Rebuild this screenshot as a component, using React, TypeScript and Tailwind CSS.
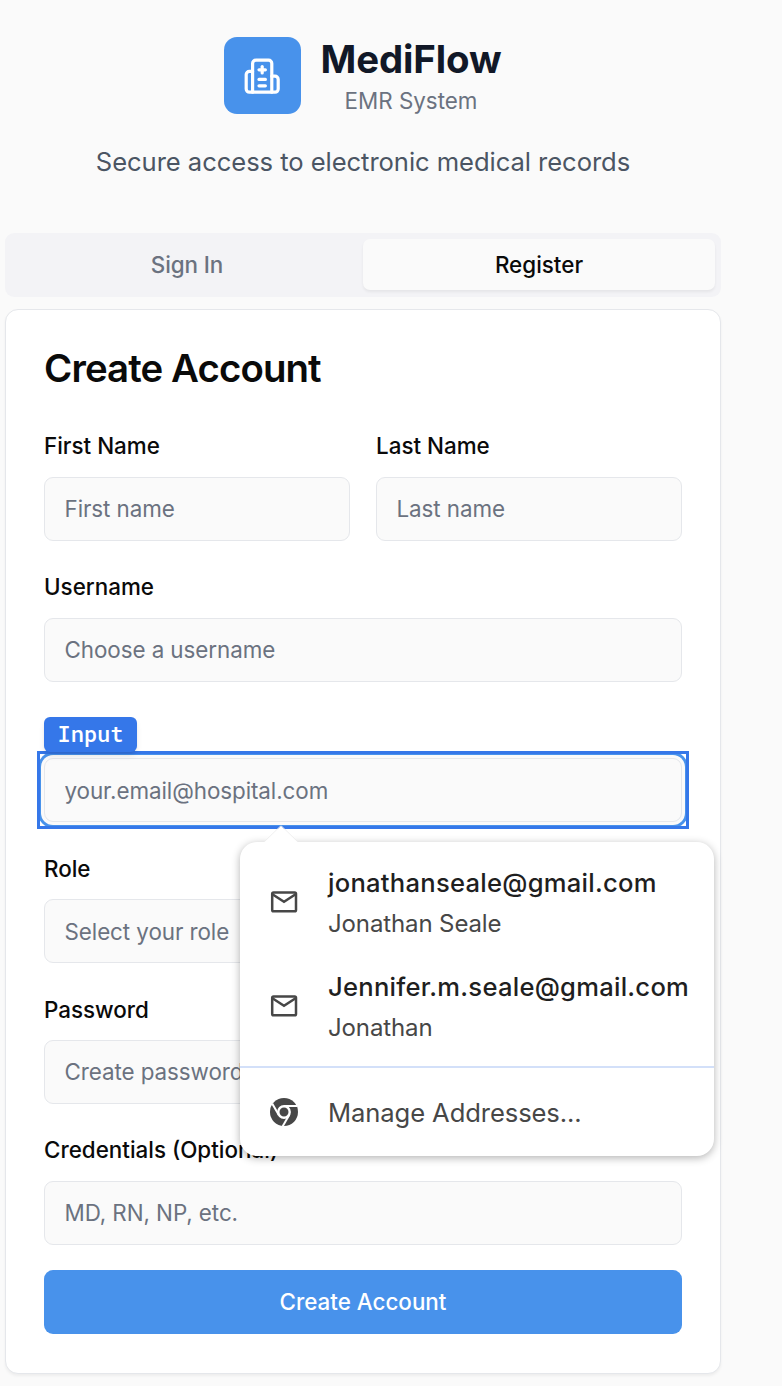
import React from "react";

type FieldProps = { label: string; placeholder: string };

const boxClass =
  "block h-16 w-full rounded-[9px] border border-[#e5e7eb] bg-[#fafafa] px-[19.5px] text-[22.4px] tracking-[-0.07px] text-gray-900 outline-none placeholder:text-[#6b7280] placeholder:opacity-100";

function Field({ label, placeholder }: FieldProps) {
  return (
    <div className="min-w-0 flex-1">
      <label className="block h-[22.4px] text-[22.4px] leading-[23.2px] font-medium">{label}</label>
      <input className={`mt-[20px] ${boxClass}`} placeholder={placeholder} />
    </div>
  );
}

function HospitalIcon() {
  return (
    <svg
      viewBox="0 0 24 24"
      className="mt-[2px] mr-[2px] size-[38.4px]"
      fill="none"
      stroke="currentColor"
      strokeWidth="2"
      strokeLinecap="round"
      strokeLinejoin="round"
    >
      <path d="M12 6v4" />
      <path d="M14 14h-4" />
      <path d="M14 18h-4" />
      <path d="M14 8h-4" />
      <path d="M18 12h2a2 2 0 0 1 2 2v6a2 2 0 0 1-2 2H4a2 2 0 0 1-2-2v-9a2 2 0 0 1 2-2h2" />
      <path d="M18 22V4a2 2 0 0 0-2-2H8a2 2 0 0 0-2 2v18" />
    </svg>
  );
}

function MailIcon() {
  return (
    <svg viewBox="0 0 28 24" className="h-6 w-7 shrink-0" fill="none" stroke="#474747" strokeWidth="2.5">
      <rect x="2.2" y="2.4" width="23.8" height="18.8" rx="1.3" />
      <path d="M2.4 4.3 14 11.7l11.6-7.4" />
    </svg>
  );
}

function ChromeIcon() {
  return (
    <svg viewBox="0 0 28 28" className="size-7 shrink-0">
      <circle cx="14" cy="14" r="14" fill="#474747" />
      <circle cx="14" cy="14" r="5.7" fill="#474747" stroke="#fff" strokeWidth="2.4" />
      <g stroke="#fff" strokeWidth="2">
        <path d="M14 8H27" />
        <path d="M14 8H27" transform="rotate(120 14 14)" />
        <path d="M14 8H27" transform="rotate(240 14 14)" />
      </g>
    </svg>
  );
}

function Suggestion({ email, name }: { email: string; name: string }) {
  return (
    <div className="flex h-[104px] items-center pl-[30px]">
      <MailIcon />
      <div className="ml-[30px] pt-[2px]">
        <div className="h-[41px] text-[25.6px] leading-[41px] font-medium tracking-[0.25px] text-[#1f1f1f]">{email}</div>
        <div className="h-[41px] text-[24px] leading-[41px] tracking-[-0.12px] text-[#474747]">{name}</div>
      </div>
    </div>
  );
}

export default function App() {
  return (
    <div className="h-[1386px] w-[782px] overflow-hidden bg-[#fafafa] pl-[5px] font-['Inter',sans-serif] text-[#0a0a0a]">
      <div className="w-[716px]">
        <header className="flex h-[233px] flex-col items-center pt-[37px]">
          <div className="flex items-start gap-[19px]">
            <div className="flex size-[77px] items-center justify-center rounded-[13px] bg-[#4892eb] text-white">
              <HospitalIcon />
            </div>
            <div className="text-center">
              <h1 className="h-[45px] text-[38.4px] leading-[44px] font-bold tracking-[-0.1px] text-[#111827]">MediFlow</h1>
              <p className="h-[38px] text-[22.4px] leading-[38px] text-[#6b7280]">EMR System</p>
            </div>
          </div>
          <p className="mt-[23px] text-[25.6px] leading-[38px] tracking-[-0.06px] text-[#4b5563]">
            Secure access to electronic medical records
          </p>
        </header>

        <div className="flex h-16 rounded-[9px] bg-[#f3f3f6] p-[6px] text-[22.4px] font-medium">
          <button className="h-[51px] flex-1 pt-px tracking-[-0.1px] text-[#6b7280]">Sign In</button>
          <button className="h-[51px] flex-1 rounded-[7px] bg-[#fafafa] pt-px shadow-[0_2px_3px_rgba(0,0,0,0.06)]">
            Register
          </button>
        </div>

        <main className="mt-[12px] h-[1065px] rounded-[13px] border border-[#e5e7eb] bg-white px-[38px] pt-[37px] shadow-[0_2px_3px_rgba(0,0,0,0.05)]">
          <h2 className="h-[42px] text-[38.4px] leading-[42px] font-semibold tracking-[-0.9px]">Create Account</h2>
          <form className="mt-[45.4px] flex flex-col gap-[34.4px]">
            <div className="flex gap-[26px]">
              <Field label="First Name" placeholder="First name" />
              <Field label="Last Name" placeholder="Last name" />
            </div>
            <Field label="Username" placeholder="Choose a username" />
            <div className="relative pt-[42.4px]">
              <div className="absolute top-[0.6px] left-0 z-10 h-[35px] w-[93px] rounded-[6px] bg-[#3577e9] text-center font-['Roboto_Mono','DejaVu_Sans_Mono',monospace] text-[22px] leading-[33px] font-medium text-white shadow-md">
                Input
              </div>
              <input
                className={`${boxClass} shadow-[0_0_0_3px_#fafafa,0_0_0_6px_#4892eb]`}
                placeholder="your.email@hospital.com"
              />
              <div className="pointer-events-none absolute -inset-x-[7px] top-[35px] h-[78px] border-[3px] border-[#3577e9]" />
              <div className="absolute top-[126px] left-[196px] z-20 h-[314px] w-[474px] rounded-[17px] bg-white shadow-[0_2px_8px_rgba(0,0,0,0.3)]">
                <svg viewBox="0 0 36 18" className="absolute -top-[17px] left-[23px] h-[18px] w-9">
                  <path d="M0 18 18 1 36 18Z" fill="#fff" />
                  <path d="M1 17 17 1.5Q18 .6 19 1.5L35 17" fill="none" stroke="#ececec" strokeWidth="0.8" />
                </svg>
                <div className="h-[226px] border-b-2 border-[#d3e0f9] pt-[8px]">
                  <Suggestion email="jonathanseale@gmail.com" name="Jonathan Seale" />
                  <Suggestion email="Jennifer.m.seale@gmail.com" name="Jonathan" />
                </div>
                <div className="flex h-[88px] items-center pl-[30px] text-[25.6px] tracking-[-0.1px] text-[#474747]">
                  <ChromeIcon />
                  <span className="ml-[30px] pt-[2px]">Manage Addresses...</span>
                </div>
              </div>
            </div>
            <Field label="Role" placeholder="Select your role" />
            <Field label="Password" placeholder="Create password" />
            <Field label="Credentials (Optional)" placeholder="MD, RN, NP, etc." />
            <button
              type="button"
              className="-mt-[8.8px] h-16 rounded-[9px] bg-[#4892eb] text-[22.4px] font-medium text-white"
            >
              Create Account
            </button>
          </form>
        </main>
      </div>
    </div>
  );
}
